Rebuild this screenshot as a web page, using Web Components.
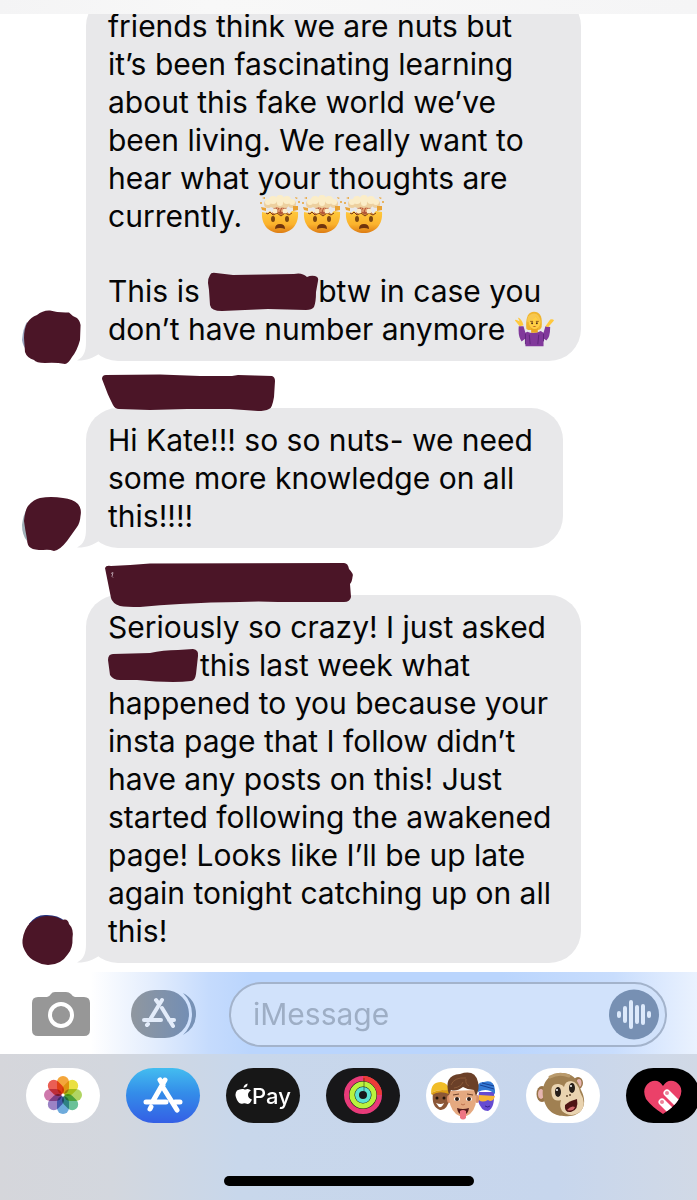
<!DOCTYPE html>
<html lang="en">
<head>
<meta charset="utf-8">
<meta name="viewport" content="width=device-width, initial-scale=1">
<title>Messages</title>
<style>
  body {
    margin: 0;
    font-family: Inter, "Liberation Sans", sans-serif;
    font-size: 30px;
    line-height: 38px;
    color: #050505;
    background: #fff;
  }
  p {
    margin: 0;
  }
  p + p {
    margin-top: 37px;
  }
</style>
</head>
<body>

<chat-screen>
  <chat-message avatar="first">
    <p>friends think we are nuts but<br>it’s been fascinating learning<br>about this fake world we’ve<br>been living. We really want to<br>hear what your thoughts are<br>currently.&nbsp; <emoji-icon name="exploding"></emoji-icon><emoji-icon name="exploding"></emoji-icon><emoji-icon name="exploding"></emoji-icon></p>
    <p>This is <hidden-name shape="wide"></hidden-name>btw in case you<br>don’t have number anymore <emoji-icon name="shrug"></emoji-icon></p>
  </chat-message>

  <chat-message avatar="second" sender="short" size="narrow">
    <p>Hi Kate!!! so so nuts- we need<br>some more knowledge on all<br>this!!!!</p>
  </chat-message>

  <chat-message avatar="third" sender="long">
    <p>Seriously so crazy! I just asked<br><hidden-name shape="small"></hidden-name>this last week what<br>happened to you because your<br>insta page that I follow didn’t<br>have any posts on this! Just<br>started following the awakened<br>page! Looks like I’ll be up late<br>again tonight catching up on all<br>this!</p>
  </chat-message>

  <compose-bar slot="compose"></compose-bar>

  <app-drawer slot="apps">
    <app-pill name="photos" label="Photos"></app-pill>
    <app-pill name="store" label="App Store"></app-pill>
    <app-pill name="pay" label="Apple Pay">Pay</app-pill>
    <app-pill name="rings" label="Activity"></app-pill>
    <app-pill name="memoji" label="Memoji"></app-pill>
    <app-pill name="monkey" label="Animoji"></app-pill>
    <app-pill name="touch" label="Digital Touch"></app-pill>
  </app-drawer>
</chat-screen>

<script>
const INK = '#4b1527';

const AVATARS = {
  first: `<svg viewBox="0 309 86 56"><path fill="#9aa6c0" d="M22 340Q23 328 27 322V350Q23 347 22 340Z"/>
    <path d="M24 338Q24 329 27 323Q31 317 37 315Q43 310 50 310.500Q58 313 69 312.500Q72 316 77 318Q81 322 80.500 327L80 340Q77 351 72 357Q68 364 65 364Q55 362 45 363Q36 363 34 360Q27 358 25 352Z"/></svg>`,
  second: `<svg viewBox="0 497 86 56"><path fill="#9fb0b8" d="M22 526Q23 516 27 510V542Q22 536 22 526Z"/>
    <path d="M24 522Q25 511 28 507Q34 500 40 499Q51 497 63 499Q73 500 78 505Q82 510 80.500 517Q80 524 77 528L67 542Q60 551 54 552Q49 550 43 551Q34 551 31 549Q27 547 27 540Q25 530 24 522Z"/></svg>`,
  third: `<svg viewBox="0 911 86 56"><path fill="#25337f" d="M29 924Q36 914 47 915Q58 915 65 921V930H29Z"/>
    <path d="M22.500 940Q24 929 30 923Q38 916 47 916Q57 916 62 920Q68 918 69 924Q74 929 72.500 938Q73 948 68 954Q61 965 48 965Q42 965 37 962Q29 959 25 951Q22 946 22.500 940Z"/></svg>`,
};

const SENDERS = {
  short: `<path d="M102 379Q102 375 106 375L160 374.500L200 376L232 376L238 375L272 376Q275 377 275 381L274 397Q272 409 269 409Q265 411 258 411L230 409L187 409L150 410L119 409Q115 409 113 405Q108 395 107 392Z"/>`,
  long: `<path d="M105 568Q106 565 111 566Q130 565 150 563.500L344 563Q348 563 349 569Q354 574 352.500 577Q352 582 350 584L351 597Q350 602 344 602L278 602Q258 601 240 602Q212 602 180 604Q160 605 140 607Q126 607 120 606Q112 603 111 598L108 583Z"/>
    <path d="M111 573.500l2-1-1 4 1 1" stroke="#b59aa6" fill="none"/>`,
};

class ChatScreen extends HTMLElement {
  constructor() {
    super();
    this.attachShadow({ mode: 'open' });
    this.shadowRoot.innerHTML = `
      <style>
        :host {
          display: flex;
          flex-direction: column;
          height: 100vh;
          overflow: hidden;
        }
        header {
          flex: none;
          height: 14px;
          background: linear-gradient(90deg, #f4f4f5, #f8f8f8 30%, #f5f5f6);
        }
        main {
          flex: 1;
          min-height: 0;
          display: flex;
          flex-direction: column;
          justify-content: flex-end;
          overflow: hidden;
          padding-bottom: 9px;
        }
      </style>
      <header></header>
      <main><slot></slot></main>
      <slot name="compose"></slot>
      <slot name="apps"></slot>
    `;
  }
}

class ChatMessage extends HTMLElement {
  constructor() {
    super();
    this.attachShadow({ mode: 'open' });
  }

  connectedCallback() {
    const sender = SENDERS[this.getAttribute('sender')];
    const top = this.getAttribute('sender') === 'short' ? 361 : 548;

    this.shadowRoot.innerHTML = `
      <style>
        :host {
          display: block;
          flex: none;
        }
        svg {
          display: block;
          fill: ${INK};
        }
        .sender {
          position: relative;
          z-index: 1;
          height: 47px;
          padding-left: 86px;
        }
        .sender svg {
          width: 300px;
          height: 60px;
        }
        .row {
          display: flex;
          align-items: flex-end;
        }
        .avatar {
          flex: none;
          width: 86px;
          margin-bottom: -4px;
        }
        .avatar svg {
          width: 86px;
          height: 56px;
        }
        .space {
          flex: 1;
        }
        .bubble {
          position: relative;
          box-sizing: border-box;
          width: 81%;
          padding: 13px 0 13px 22px;
          border-radius: 32px;
          background: #e8e8ea;
          white-space: nowrap;
        }
        :host([size="narrow"]) .bubble {
          width: 78%;
        }
        .tail {
          position: absolute;
          left: -9px;
          bottom: 0;
          width: 22px;
          height: 36px;
          fill: #e8e8ea;
        }
      </style>
      ${sender ? `<div class="sender"><svg viewBox="86 ${top} 300 60" aria-hidden="true">${sender}</svg></div>` : ''}
      <div class="row">
        <div class="avatar">${AVATARS[this.getAttribute('avatar')]}</div>
        <div class="space">
          <div class="bubble">
            <svg class="tail" viewBox="0 0 22 36"><path d="M9 0V17C9 26 7 32 0 35.500C8 36 16 33 22 29V0Z"/></svg>
            <slot></slot>
          </div>
        </div>
      </div>
    `;
  }
}

// scribbled-out name inside a line of text
class HiddenName extends HTMLElement {
  constructor() {
    super();
    this.attachShadow({ mode: 'open' });
  }

  connectedCallback() {
    const wide = this.getAttribute('shape') === 'wide';
    const path = wide
      ? 'M0 11Q0 6 2 3Q3 0 8 1L25 3L86 2Q94 0 99 5Q103 3 107 4Q111 5 110 9L108 20Q108 30 106 35Q104 38 98 38L60 37L14 39Q3 39 2 33L1 18Z'
      : 'M0 14Q0 8 5 8L42 7Q55 4 70 4L85 3Q91 4 90 10L88 28Q87 35 83 35Q75 36 65 36Q48 36 29 34L12 34Q5 34 2 29Z';

    this.shadowRoot.innerHTML = `
      <style>
        :host {
          display: inline-block;
          vertical-align: top;
          width: ${wide ? 110 : 92}px;
          height: 38px;
        }
        svg {
          display: block;
          width: 100%;
          height: 100%;
          overflow: visible;
        }
      </style>
      <svg viewBox="0 0 ${wide ? 110 : 92} 38" aria-hidden="true"><path fill="${INK}" d="${path}"/></svg>
    `;
  }
}

const EMOJI = {
  exploding: {
    label: 'exploding head',
    viewBox: '0 2 42 38',
    width: 42,
    art: `
      <defs><linearGradient id="g" x2="0" y2="1"><stop offset="0" stop-color="#ffc93c"/><stop offset=".6" stop-color="#fbb32d"/><stop offset="1" stop-color="#dd7c14"/></linearGradient></defs>
      <path d="M14 9H28L27 16L31 20H11L15 16Z" fill="#b4573a"/>
      <path d="M18 12l2 5 1-5 2 5 1-5" stroke="#e6a070" fill="none"/>
      <path d="M3 17L8 18 11 16 14 19 18 17 22 20 26 17 30 19 33 16 39 17C40 30 32 38 21 38S2 30 3 17Z" fill="url(#g)"/>
      <path d="M7 18l2 1 2-2 3 3 4-2 4 3 4-3 4 2 3-2" stroke="#7d3517" fill="none"/>
      <g fill="#edd09f"><circle cx="9" cy="9" r="4"/><circle cx="15" cy="9" r="4"/><circle cx="26" cy="9" r="4"/><circle cx="33" cy="9" r="4"/><circle cx="21" cy="9" r="4"/></g>
      <g fill="#fbedc8"><circle cx="9" cy="7" r="3"/><circle cx="14" cy="5" r="4"/><circle cx="21" cy="4" r="4"/><circle cx="28" cy="5" r="4"/><circle cx="33" cy="7" r="3"/><circle cx="21" cy="8" r="3"/><circle cx="16" cy="16" r="2.500"/><circle cx="26" cy="16" r="2.500"/></g>
      <g fill="#e9a233"><path d="M2 12l5 1 0 3-4-1zM34 11l5 0 0 4-5 1zM3 3l3-1 0 2zM36 2l3 1-2 1z"/><circle cx="2" cy="8" r="1"/><circle cx="40" cy="7" r="1"/></g>
      <g fill="#7a4610"><ellipse cx="14" cy="24" rx="2" ry="3"/><ellipse cx="28" cy="24" rx="2" ry="3"/></g>
      <path d="M16 34q0-5 5-5t5 5q-5-2-10 0Z" fill="#70340d"/>`,
  },
  shrug: {
    label: 'woman shrugging',
    viewBox: '0 0 42 38',
    width: 40,
    art: `
      <path d="M13 19C12 9 14 1 21 1S30 7 29 17Q28 20 25 20H15Z" fill="#efb42e"/>
      <path d="M18 17h7v6h-7z" fill="#e9a522"/>
      <path d="M15 10Q20 9 23 5Q25 10 28 11Q27 19 21 19Q16 18 15 10Z" fill="#ffcf45"/>
      <path d="M14 12Q13 5 19 3Q26 1 28 11Q24 9 23 5Q20 10 14 12Z" fill="#f7c84f"/>
      <path d="M17 11h3M23 11h3" stroke="#8b581b"/><circle cx="19" cy="13" r="1" fill="#513018"/><circle cx="24" cy="13" r="1" fill="#513018"/>
      <path d="M19.500 17q2-2 4 0z" fill="#a43c18"/>
      <path d="M14 22Q21 25 28 21L31 23 33 16 38 17Q38 28 34 31L31 29V37H12V29L8 32Q4 27 5 16L10 16 12 23Z" fill="#81389b"/>
      <path d="M12 24v11M31 24v8M16 25l1 10M26 25l-1 10" stroke="#5f247b" fill="none"/>
      <path d="M6 16L1 10Q1 8 6 11L4 7Q8 8 10 15ZM33 16L38 9Q41 8 42 10L36 17Z" fill="#ffc83d"/>`,
  },
};

class EmojiIcon extends HTMLElement {
  constructor() {
    super();
    this.attachShadow({ mode: 'open' });
  }

  connectedCallback() {
    const emoji = EMOJI[this.getAttribute('name')];
    this.shadowRoot.innerHTML = `
      <style>
        :host {
          display: inline-block;
          vertical-align: top;
          width: ${emoji.width}px;
          height: 38px;
        }
        svg {
          display: block;
          width: 100%;
          height: 100%;
          overflow: visible;
        }
      </style>
      <svg viewBox="${emoji.viewBox}" role="img" aria-label="${emoji.label}">${emoji.art}</svg>
    `;
  }
}

class ComposeBar extends HTMLElement {
  constructor() {
    super();
    this.attachShadow({ mode: 'open' });
    this.shadowRoot.innerHTML = `
      <style>
        :host {
          display: flex;
          align-items: center;
          flex: none;
          box-sizing: border-box;
          height: 82px;
          padding: 2px 30px 0 32px;
          background: linear-gradient(90deg, #fff 13%, #e3edfd 22%, #c5dbfd 30%, #bad5fd 36%, #bad5fd 72%, #c8ddfd 88%, #dfebfe 96%, #eaf2fe);
        }
        button {
          flex: none;
          padding: 0;
          border: 0;
          background: none;
        }
        svg {
          display: block;
        }
        .camera {
          margin-right: 41px;
        }
        .apps {
          margin-right: 32px;
        }
        .field {
          flex: 1;
          min-width: 0;
          display: flex;
          align-items: center;
          box-sizing: border-box;
          height: 65px;
          padding: 0 5px 0 22px;
          border: 2px solid #a3b3cb;
          border-radius: 33px;
          background: #d1e2fb;
        }
        input {
          flex: 1;
          min-width: 0;
          padding: 0;
          border: 0;
          outline: 0;
          background: none;
          font: inherit;
          color: #050505;
        }
        input::placeholder {
          color: #9eaec5;
          opacity: 1;
        }
      </style>
      <button class="camera" aria-label="Camera">
        <svg width="58" height="44" viewBox="0 0 58 44">
          <path fill="#979797" d="M6 5H15Q17 5 19 2Q20 0 23 0H34Q37 0 39 2Q41 5 43 5H52Q58 5 58 11V38Q58 44 52 44H6Q0 44 0 38V11Q0 5 6 5Z"/>
          <circle cx="29" cy="23" r="11" fill="none" stroke="#fff" stroke-width="4"/>
        </svg>
      </button>
      <button class="apps" aria-label="Apps">
        <svg width="66" height="48" viewBox="0 0 66 48">
          <defs><linearGradient id="a"><stop offset="0" stop-color="#90979f"/><stop offset="1" stop-color="#738eb4"/></linearGradient></defs>
          <rect width="58" height="48" rx="24" fill="url(#a)"/>
          <path d="M52 3Q65 10 65 24T52 45Q61 36 61 24T52 3Z" fill="#7892b6"/>
          <g stroke="#e3ecfa" stroke-width="4" stroke-linecap="round" fill="none">
            <path d="M31 10L20 28M25 10L28 14M31 18L42 36M13 30H30M38 30H43M16 35L17 34"/>
          </g>
        </svg>
      </button>
      <div class="field">
        <input type="text" placeholder="iMessage" aria-label="iMessage">
        <button aria-label="Record audio">
          <svg width="51" height="51" viewBox="0 0 51 51">
            <circle cx="25" cy="25.500" r="25" fill="#7790b3"/>
            <path d="M10 24v3M16 19v13M22 13v25M28 18v15M34 17v17M40 24v3" stroke="#dce9fb" stroke-width="4" stroke-linecap="round"/>
          </svg>
        </button>
      </div>
    `;
  }
}

class AppDrawer extends HTMLElement {
  constructor() {
    super();
    this.attachShadow({ mode: 'open' });
    this.shadowRoot.innerHTML = `
      <style>
        :host {
          display: flex;
          flex-direction: column;
          justify-content: space-between;
          align-items: center;
          flex: none;
          box-sizing: border-box;
          height: 146px;
          padding: 14px 0;
          background: linear-gradient(90deg, #d5d6db, #d3d7de 16%, #c8d7eb 34%, #c7d6ed 80%, #d1d9e6);
        }
        nav {
          display: flex;
          gap: 26px;
          box-sizing: border-box;
          width: 100%;
          padding-left: 26px;
          overflow: hidden;
        }
        .home {
          width: 250px;
          height: 10px;
          border-radius: 5px;
          background: #000;
        }
      </style>
      <nav aria-label="Apps"><slot></slot></nav>
      <div class="home"></div>
    `;
  }
}

const PETALS = ['#f39a1f', '#e8dc28', '#a5cf4c', '#55b98a', '#5a9fd8', '#8d72bd', '#c765a0', '#e8473c'];

const APP_ART = {
  photos: {
    background: '#fff',
    art: `<g style="isolation:isolate">${PETALS.map((color, i) =>
      `<rect x="31" y="8" width="12" height="18" rx="6" fill="${color}" opacity=".88" style="mix-blend-mode:multiply" transform="rotate(${i * 45} 37 27)"/>`).join('')}</g>
      <circle cx="37" cy="27" r="1.500" fill="#fff"/>`,
  },
  store: {
    background: 'linear-gradient(#43bdf0, #348de9 45%, #345fe5)',
    art: `<g stroke="#fff" stroke-width="5" stroke-linecap="round" fill="none">
      <path d="M39 12L27 33M34 12L37 17M38 21L51 42M20 34H40M49 34H54M24 41L25 39"/></g>`,
  },
  pay: {
    background: '#171717',
    art: `<path fill="#fff" d="M17.500 21Q19 22 21 21Q23 20.500 25 22.500Q22 24 22 27T26 31.500Q24 36 21.500 36Q19 35 17 35.500Q14 37 11 32Q8 26 11 22.500Q14 20.500 17.500 21ZM17.500 20Q17.500 16.500 21.500 15.500Q22 19 17.500 20Z"/>`,
  },
  rings: {
    background: '#171719',
    art: `<g fill="none" stroke-width="5"><circle cx="37" cy="27" r="16.500" stroke="#e83b79"/><path d="M37 10.500A16.500 16.500 0 0 1 53.500 27" stroke="#ed3b37"/>
      <circle cx="37" cy="27" r="11" stroke="#b9f23e"/><circle cx="37" cy="27" r="6" stroke="#5ce2d2" stroke-width="4"/></g>
      <path d="M38 20v-10M38 23v-3" stroke="#171719" opacity=".5"/>`,
  },
  memoji: {
    background: '#fff',
    art: `
      <path d="M7 25Q5 39 14 42Q21 43 24 30L22 22Z" fill="#8c5737"/>
      <path d="M5 25Q5 14 15 14Q23 15 23 23Q14 20 5 25Z" fill="#f1bd28"/>
      <path d="M5 25Q14 20 23 23V26Q13 22 6 27Z" fill="#dc9d14"/>
      <circle cx="11" cy="30" r="1.500" fill="#24130a"/><circle cx="18" cy="30" r="1.500" fill="#24130a"/>
      <path d="M10 35q5 2 8 0q-2 5-5 4z" fill="#fff"/>
      <path d="M53 24L68 24Q69 40 62 43Q55 43 52 33Z" fill="#654bd1"/>
      <path d="M52 24Q50 13 58 14Q68 11 69 22V26Q61 19 52 24Z" fill="#347ad5"/>
      <path d="M54 17l14 4M56 15l12 3" stroke="#173f91"/>
      <path d="M53 27L69 28Q67 35 62 32Q56 35 53 32Z" fill="#f7b633"/>
      <path d="M59 38q3 2 5 0" stroke="#37208d" fill="none"/>
      <ellipse cx="23" cy="31" rx="2" ry="4" fill="#dc9069"/><ellipse cx="51" cy="31" rx="2" ry="4" fill="#dc9069"/>
      <path d="M23 23Q22 39 30 46Q37 51 44 46Q52 39 50 22Z" fill="#e5a980"/>
      <path d="M23 27Q17 7 34 6Q49 1 52 14Q54 20 50 28L48 22Q42 22 37 19Q30 24 25 22Z" fill="#6b4028"/>
      <path d="M25 17Q28 9 40 10M28 20Q35 19 37 14M43 18Q39 16 40 11" stroke="#8b5a38" fill="none"/>
      <path d="M27 27l6-1M41 26l6 1" stroke="#70432b"/>
      <ellipse cx="31" cy="31" rx="3" ry="2" fill="#fff"/><ellipse cx="43" cy="31" rx="3" ry="2" fill="#fff"/>
      <circle cx="31" cy="31" r="2" fill="#2f1a12"/><circle cx="43" cy="31" r="2" fill="#2f1a12"/>
      <path d="M35 36q2 2 4 0" stroke="#bd714d" fill="none"/>
      <path d="M31 40Q37 42 43 40Q42 47 37 47T31 40Z" fill="#541c1b"/>
      <path d="M34 43Q37 41 40 43V50Q37 53 34 50Z" fill="#ee7584"/>`,
  },
  monkey: {
    background: '#fff',
    art: `
      <ellipse cx="16" cy="26" rx="5.500" ry="8" fill="#987448"/><ellipse cx="15" cy="26" rx="3" ry="5" fill="#e6b5b0"/>
      <ellipse cx="52" cy="15" rx="5" ry="6" fill="#987448"/><ellipse cx="53" cy="15" rx="2.500" ry="4" fill="#e6b5b0"/>
      <path d="M17 29C15 14 24 5 35 5S51 10 55 22C62 35 57 47 44 48S21 46 17 29Z" fill="#a08052"/>
      <path d="M24 9Q33 4 43 8" stroke="#b99a6c" stroke-width="3" stroke-linecap="round" fill="none"/>
      <path d="M26 28Q23 15 33 16Q37 17 38 19Q39 13 45 13Q52 14 54 24Q61 36 55 43Q45 51 36 43Q33 38 35 32Q28 34 26 28Z" fill="#e9d3b0"/>
      <ellipse cx="32" cy="24" rx="3" ry="5" fill="#261e19"/><ellipse cx="46" cy="20" rx="3" ry="5" fill="#261e19"/>
      <circle cx="31" cy="22" r="1" fill="#fff"/><circle cx="45" cy="18" r="1" fill="#fff"/>
      <circle cx="41" cy="28" r="1" fill="#5d432b"/><circle cx="44" cy="27" r="1" fill="#5d432b"/>
      <path d="M39 37Q43 33 51 31Q53 42 45 44Q38 45 39 37Z" fill="#4e1415"/><path d="M41 42Q45 37 49 39Q47 44 41 42Z" fill="#cf666a"/>`,
  },
  touch: {
    background: '#000',
    art: `<clipPath id="h"><path d="M37 18Q42 10 50 14Q59 20 53 31Q48 39 37 46Q26 39 20 31Q15 20 24 14Q32 10 37 18Z"/></clipPath>
      <g clip-path="url(#h)"><path fill="#eb4169" d="M0 0h74v55H0z"/>
      <g stroke="#fff" stroke-width="7" stroke-linecap="round"><path d="M41 25L55 39M36 34L50 48"/></g></g>
      <circle cx="41" cy="25" r="2" fill="#eb8299"/><circle cx="36" cy="34" r="2" fill="#eb8299"/>`,
  },
};

class AppPill extends HTMLElement {
  constructor() {
    super();
    this.attachShadow({ mode: 'open' });
  }

  connectedCallback() {
    const app = APP_ART[this.getAttribute('name')];
    this.shadowRoot.innerHTML = `
      <style>
        :host {
          display: block;
          flex: none;
        }
        button {
          display: grid;
          align-items: center;
          width: 74px;
          height: 55px;
          padding: 0;
          border: 0;
          border-radius: 28px;
          overflow: hidden;
          background: ${app.background};
          color: #fff;
          font: 500 22px/28px Inter, sans-serif;
          text-align: left;
        }
        svg, span {
          grid-area: 1 / 1;
        }
        span {
          padding-left: 26px;
        }
      </style>
      <button aria-label="${this.getAttribute('label')}">
        <svg width="74" height="55" viewBox="0 0 74 55" aria-hidden="true">${app.art}</svg>
        <span><slot></slot></span>
      </button>
    `;
  }
}

customElements.define('chat-screen', ChatScreen);
customElements.define('chat-message', ChatMessage);
customElements.define('hidden-name', HiddenName);
customElements.define('emoji-icon', EmojiIcon);
customElements.define('compose-bar', ComposeBar);
customElements.define('app-drawer', AppDrawer);
customElements.define('app-pill', AppPill);
</script>
</body>
</html>
